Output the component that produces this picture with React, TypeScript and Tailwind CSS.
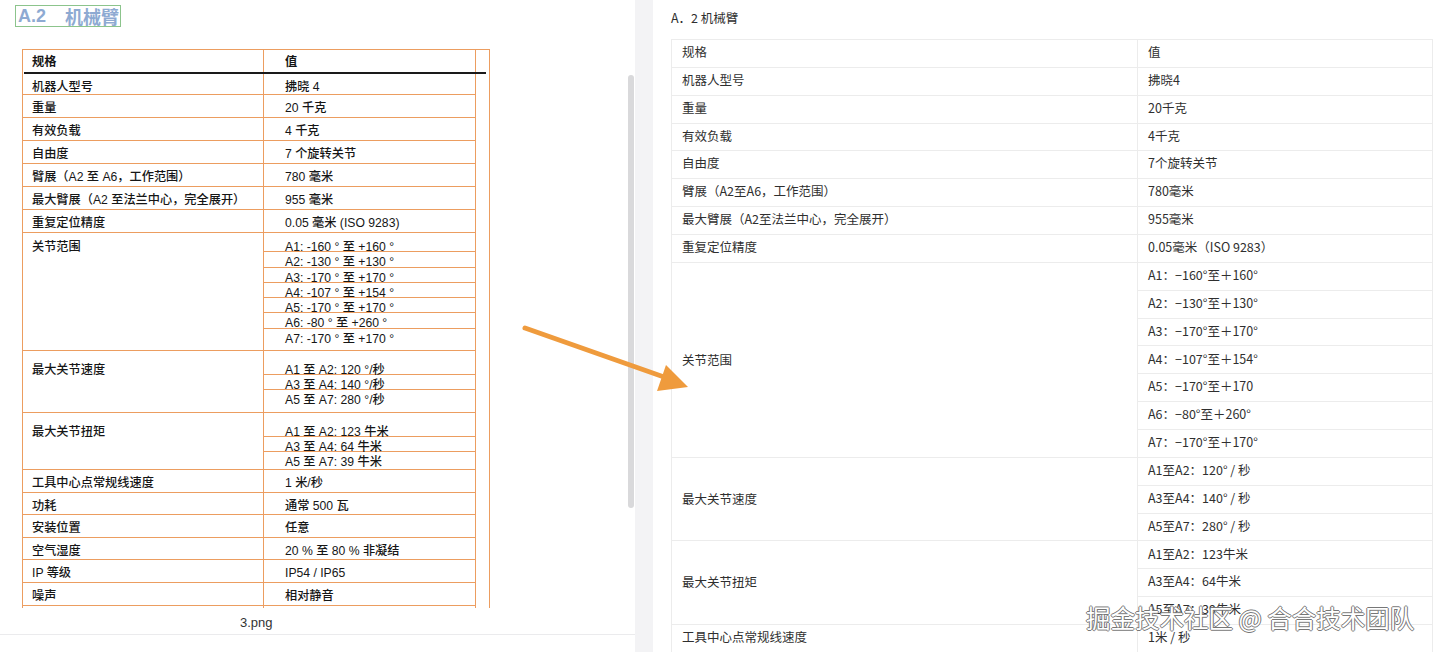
import React from "react";

const leftTop: [string, string][] = [
  ["机器人型号", "拂晓 4"],
  ["重量", "20 千克"],
  ["有效负载", "4 千克"],
  ["自由度", "7 个旋转关节"],
  ["臂展（A2 至 A6，工作范围）", "780 毫米"],
  ["最大臂展（A2 至法兰中心，完全展开）", "955 毫米"],
  ["重复定位精度", "0.05 毫米 (ISO 9283)"],
];

const leftBottom: [string, string][] = [
  ["工具中心点常规线速度", "1 米/秒"],
  ["功耗", "通常 500 瓦"],
  ["安装位置", "任意"],
  ["空气湿度", "20 % 至 80 % 非凝结"],
  ["IP 等级", "IP54 / IP65"],
  ["噪声", "相对静音"],
  ["", ""],
];

const leftJoints = [
  "A1: -160 ° 至 +160 °",
  "A2: -130 ° 至 +130 °",
  "A3: -170 ° 至 +170 °",
  "A4: -107 ° 至 +154 °",
  "A5: -170 ° 至 +170 °",
  "A6: -80 ° 至 +260 °",
  "A7: -170 ° 至 +170 °",
];
const leftSpeed = ["A1 至 A2: 120 °/秒", "A3 至 A4: 140 °/秒", "A5 至 A7: 280 °/秒"];
const leftTorque = ["A1 至 A2: 123 牛米", "A3 至 A4: 64 牛米", "A5 至 A7: 39 牛米"];

const rightTop: [string, string][] = [
  ["规格", "值"],
  ["机器人型号", "拂晓4"],
  ["重量", "20千克"],
  ["有效负载", "4千克"],
  ["自由度", "7个旋转关节"],
  ["臂展（A2至A6，工作范围）", "780毫米"],
  ["最大臂展（A2至法兰中心，完全展开）", "955毫米"],
  ["重复定位精度", "0.05毫米（ISO 9283）"],
];

const rightJoints = [
  "A1：−160°至＋160°",
  "A2：−130°至＋130°",
  "A3：−170°至＋170°",
  "A4：−107°至＋154°",
  "A5：−170°至＋170",
  "A6：−80°至＋260°",
  "A7：−170°至＋170°",
];
const rightSpeed = ["A1至A2：120° / 秒", "A3至A4：140° / 秒", "A5至A7：280° / 秒"];
const rightTorque = ["A1至A2：123牛米", "A3至A4：64牛米", "A5至A7：39牛米"];

function LeftRow({ label, value, h }: { label: string; value: string; h: string }) {
  return (
    <div className="flex">
      <div className={`w-[241px] ${h} border-r border-b border-[#ec9d60] pl-[9px] pt-[6px] leading-[14px]`}>{label}</div>
      <div className={`w-[212px] ${h} border-r border-b border-[#ec9d60] pl-[21px] pt-[6px] leading-[14px]`}>{value}</div>
    </div>
  );
}

function LeftGroup({ label, items, h, labelPt, valuePt, subH }: { label: string; items: string[]; h: string; labelPt: string; valuePt: string; subH: string }) {
  return (
    <div className="flex">
      <div className={`w-[241px] ${h} border-r border-b border-[#ec9d60] pl-[9px] ${labelPt} leading-[14px]`}>{label}</div>
      <div className={`w-[212px] ${h} border-r border-b border-[#ec9d60] ${valuePt} flex flex-col`}>
        {items.map((t, i) => (
          <div
            key={i}
            className={`${subH} pl-[21px] pt-[4px] leading-[12px] whitespace-nowrap ${i < items.length - 1 ? "border-b border-[#ec9d60]" : ""}`}
          >
            {t}
          </div>
        ))}
      </div>
    </div>
  );
}

function RightRow({ label, value }: { label: string; value: string }) {
  return (
    <div className="flex h-[27.86px] border-b border-[#ececec]">
      <div className="w-[466px] border-r border-[#ececec] pl-[10px] flex items-center pb-[2px]">{label}</div>
      <div className="flex-1 pl-[10px] flex items-center pb-[2px]">{value}</div>
    </div>
  );
}

function RightGroup({ label, items, h }: { label: string; items: string[]; h: string }) {
  return (
    <div className={`flex ${h} border-b border-[#ececec]`}>
      <div className="w-[466px] border-r border-[#ececec] pl-[10px] flex items-center">{label}</div>
      <div className="flex-1 flex flex-col">
        {items.map((t, i) => (
          <div
            key={i}
            className={`flex-1 pl-[10px] flex items-center pb-[2px] ${i < items.length - 1 ? "border-b border-[#ececec]" : ""}`}
          >
            {t}
          </div>
        ))}
      </div>
    </div>
  );
}

export default function App() {
  return (
    <div className="relative w-[1440px] h-[652px] overflow-hidden bg-white flex font-['Noto_Sans_CJK_SC',sans-serif]">
      {/* Left panel */}
      <div className="w-[635px] flex flex-col">
        <div className="flex h-[634px]">
          <div className="w-[628px] flex flex-col">
            <div className="pt-[3px] pl-[15px]">
              <div className="inline-flex items-center h-[22px] border border-[#8cc48c] pl-[2px] pr-[1px] text-[18px] font-bold leading-none text-[#8eaad2]">
                <span className="font-['Liberation_Sans',sans-serif]">A.2</span>
                <span className="ml-[19px] font-['Noto_Sans_CJK_SC',sans-serif]">机械臂</span>
              </div>
            </div>
            <div className="mt-[22px] ml-[22px] h-[559px] overflow-hidden">
              <div className="w-[468px] border-l border-t border-r border-[#ec9d60] text-[12.2px] text-[#161616] font-medium font-['Liberation_Sans','Noto_Sans_CJK_SC',sans-serif]">
                <div className="flex h-[22px]">
                  <div className="w-[241px] border-r border-[#ec9d60] pl-[9px] pt-[5px] leading-[14px] font-bold">规格</div>
                  <div className="w-[212px] border-r border-[#ec9d60] pl-[21px] pt-[5px] leading-[14px] font-bold">值</div>
                </div>
                <div className="h-[1.5px] w-[462px] ml-[1px] bg-[#1a1a1a]" />
                {leftTop.map(([l, v], i) => (
                  <LeftRow key={l} label={l} value={v} h={i === 0 ? "h-[21.5px]" : "h-[23px]"} />
                ))}
                <LeftGroup label="关节范围" items={leftJoints} h="h-[118px]" labelPt="pt-[7px]" valuePt="pt-[4px]" subH="h-[15.3px]" />
                <LeftGroup label="最大关节速度" items={leftSpeed} h="h-[62px]" labelPt="pt-[12px]" valuePt="pt-[9px]" subH="h-[15px]" />
                <LeftGroup label="最大关节扭矩" items={leftTorque} h="h-[57px]" labelPt="pt-[12px]" valuePt="pt-[9px]" subH="h-[15px]" />
                {leftBottom.map(([l, v], i) => (
                  <LeftRow key={i} label={l} value={v} h="h-[22.6px]" />
                ))}
              </div>
            </div>
            <div className="mt-[7px] pl-[240px] text-[13px] leading-[16px] text-[#333] font-['Liberation_Sans',sans-serif]">3.png</div>
          </div>
          <div className="w-[7px]">
            <div className="mt-[75px] h-[433px] w-[6px] rounded-full bg-[#d9d9db]" />
          </div>
        </div>
        <div className="h-px bg-[#ebebed]" />
      </div>

      {/* Divider strip */}
      <div className="w-[18px] h-full bg-[#f3f3f5]" />

      {/* Right panel */}
      <div className="flex-1 pl-[18px] pr-[7px] text-[12.5px] text-[#2f2f2f] font-['Noto_Sans_CJK_SC',sans-serif]">
        <div className="pt-[11px] leading-[14px]">A．2 机械臂</div>
        <div className="mt-[14px] border-l border-t border-r border-[#ececec]">
          {rightTop.map(([l, v]) => (
            <RightRow key={l} label={l} value={v} />
          ))}
          <RightGroup label="关节范围" items={rightJoints} h="h-[195px]" />
          <RightGroup label="最大关节速度" items={rightSpeed} h="h-[83.6px]" />
          <RightGroup label="最大关节扭矩" items={rightTorque} h="h-[83.6px]" />
          <RightRow label="工具中心点常规线速度" value="1米 / 秒" />
        </div>
      </div>

      {/* Arrow overlay */}
      <svg className="absolute left-0 top-0 pointer-events-none" width="1440" height="652" viewBox="0 0 1440 652">
        <line x1="525" y1="328" x2="664" y2="377" stroke="#ef9b3d" strokeWidth="5" strokeLinecap="round" />
        <polygon points="666,365 657,391 688,387" fill="#ef9b3d" />
      </svg>

      {/* Watermark */}
      <div className="absolute left-[1086px] top-[602px] text-[24.5px] leading-[32px] text-white whitespace-nowrap font-['Noto_Sans_CJK_SC',sans-serif] [text-shadow:1px_0_0_#777,-1px_0_0_#777,0_1px_0_#777,0_-1px_0_#777]">
        掘金技术社区 @ 合合技术团队
      </div>
    </div>
  );
}
